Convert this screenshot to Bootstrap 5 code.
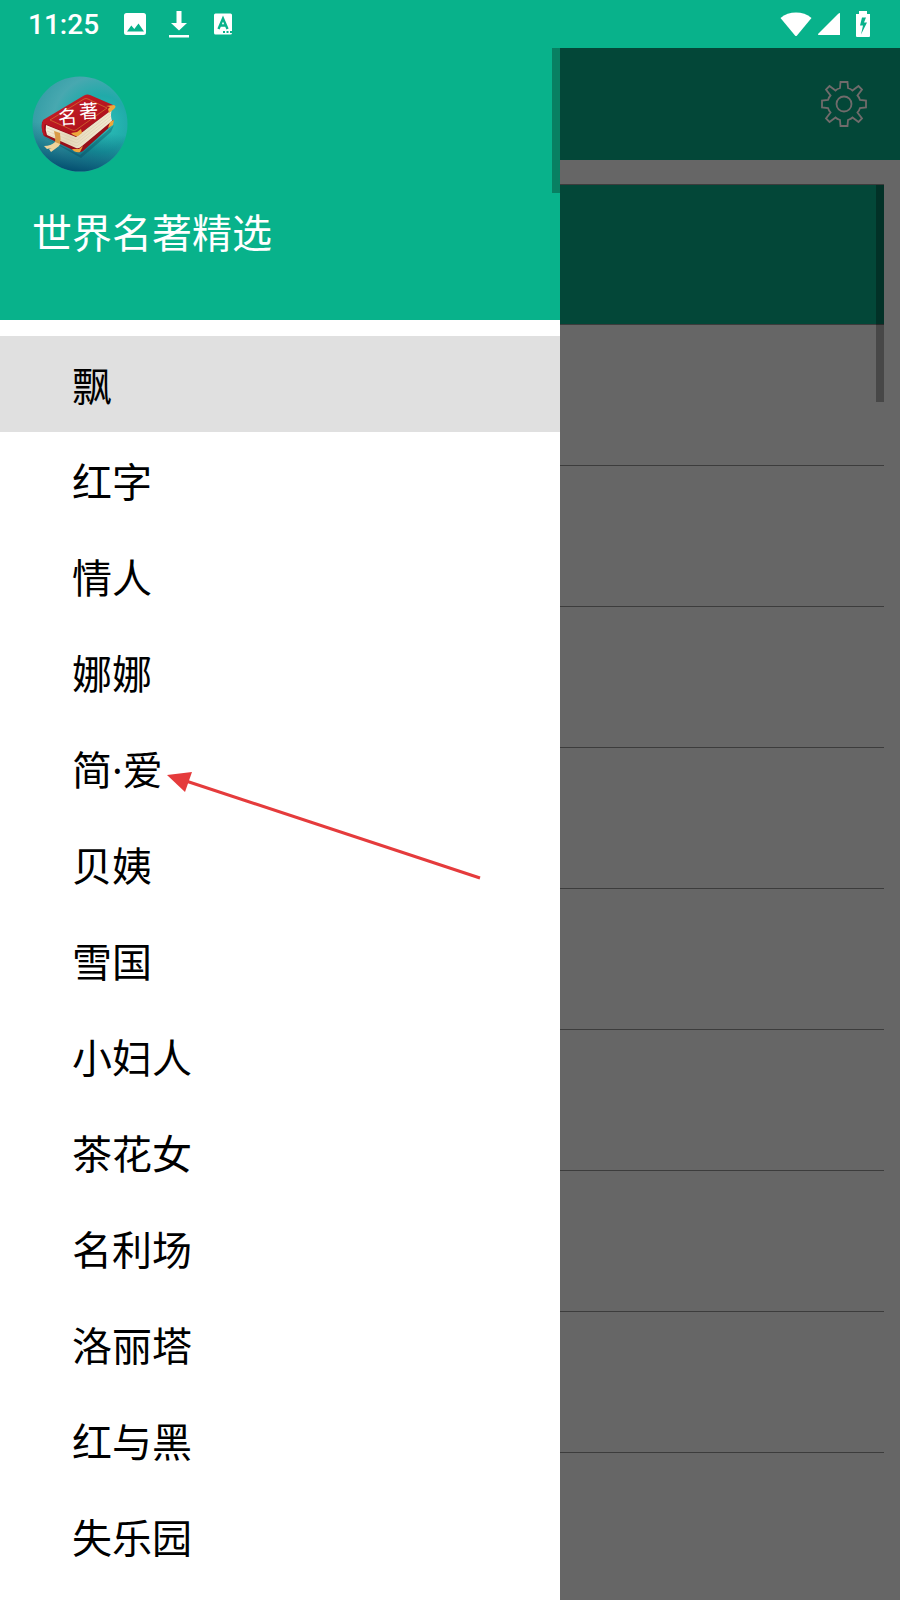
<!DOCTYPE html>
<html lang="zh-CN">
<head>
<meta charset="utf-8">
<meta name="viewport" content="width=device-width, initial-scale=1">
<title>世界名著精选</title>
<link rel="stylesheet" href="https://cdn.jsdelivr.net/npm/bootstrap@5.3.0/dist/css/bootstrap.min.css">
<style>
  :root { --brand: #08b28b; --brand-dim: #034738; --shade: #666; }
  body { font-family: "Noto Sans", "Noto Sans CJK SC", sans-serif; background: #fff; color: #000; }
  .status-bar { height: 48px; background: var(--brand); color: #fff; padding: 0 30px 0 28px; }
  .clock { font: 500 28px/46px Roboto, sans-serif; padding-top: 2px; }
  .download-icon { margin-left: 22px; }
  .drawer { flex: 0 0 560px; }
  .drawer-head { background: var(--brand); color: #fff; height: 272px; padding: 28px 32px; }
  .drawer-title, .book-link { font-size: 40px; font-weight: 400; line-height: 60px; }
  .drawer-title { margin: 31px 0 0; }
  .book-link { height: 96px; padding: 4px 72px 0; color: #000; text-decoration: none; }
  .book-link.active { background: #e0e0e0; }
  .thumb { top: 0; right: 0; width: 8px; }
  .drawer-thumb { height: 145px; background: #088062; }
  .list-thumb { height: 217px; background: rgba(0, 0, 0, .3); }
  .content { background: var(--shade); }
  .top-bar { height: 112px; background: var(--brand-dim); padding: 0 30px; }
  .chapters { margin: 24px 16px 0 0; border-top: 1px solid #3c3c3c; }
  .chapter-row { height: 141px; border-bottom: 1px solid #3c3c3c; }
  .chapter-row:first-child { height: 140px; background: var(--brand-dim); }
  .chapter-row:last-child { border-bottom: 0; }
  .pointer { left: 166px; top: 50%; }
</style>
</head>
<body class="min-vh-100 d-flex flex-column">
<header class="status-bar d-flex align-items-center">
  <span class="clock">11:25</span>
  <svg class="ms-4" width="24" height="24" viewBox="0 0 24 24" aria-hidden="true"><path fill="#fff" fill-rule="evenodd" d="M3.500 1h17A2.500 2.500 0 0 1 23 3.500v17a2.500 2.500 0 0 1-2.500 2.500h-17A2.500 2.500 0 0 1 1 20.500v-17A2.500 2.500 0 0 1 3.500 1zM4 19.500h17l-5.500-8-4.200 5.500-3-3.500z"/></svg>
  <svg class="download-icon" width="20" height="28" viewBox="0 0 20 28" aria-hidden="true"><path fill="#fff" d="M7.500 1h5v12H18l-8 7.500L2 13h5.500zM0 25h20v2.500H0z"/></svg>
  <svg class="ms-4" width="20" height="22" viewBox="0 0 20 22" aria-hidden="true"><rect x="1" y="0.500" width="18" height="21" rx="1.500" fill="#fff"/><path fill="none" stroke="#08b28b" stroke-width="2.400" d="M5.500 16 10 5.500 14.500 16M7 12.500h6"/><path fill="#08b28b" d="M10 18h2v2h-2zm3.500 0h2v2h-2zm3.500 0h2v2h-2z"/></svg>
  <svg class="ms-auto" width="32" height="26" viewBox="0 0 32 26" aria-hidden="true"><path fill="#fff" d="M.5 7C9-.3 23-.3 31.500 7L17 24.500q-1 1-2 0z"/></svg>
  <svg class="ms-1" width="24" height="24" viewBox="0 0 24 24" aria-hidden="true"><path fill="#fff" d="M24 1v22H3q-1.500 0-1-1L22 2q1-1 2-1z"/></svg>
  <svg class="ms-3" width="14" height="26" viewBox="0 0 14 26" aria-hidden="true"><path fill="#fff" fill-rule="evenodd" d="M3 0h8v3h3v22q0 1-1 1H1q-1 0-1-1V3h3zM6 6.500 4 14.500h3L5 23.500l6-12H8l2-5z"/></svg>
</header>
<div class="d-flex flex-grow-1">
  <aside class="drawer position-relative bg-white">
    <div class="drawer-head">
      <svg class="d-block" width="96" height="96" viewBox="0 0 96 96" role="img" aria-label="名著">
        <defs>
          <radialGradient id="sky" cx=".72" cy=".5" r=".85"><stop offset="0" stop-color="#2cc0ba"/><stop offset=".35" stop-color="#20aaa9"/><stop offset=".6" stop-color="#48a8b0"/><stop offset="1" stop-color="#2a98a0"/></radialGradient>
          <linearGradient id="deep" x1=".6" y1="0" x2=".45" y2="1"><stop offset=".55" stop-color="#07617a" stop-opacity="0"/><stop offset="1" stop-color="#034f70"/></linearGradient>
          <linearGradient id="cover" x2="1" y2="1"><stop stop-color="#c9202a"/><stop offset="1" stop-color="#a80d18"/></linearGradient>
          <linearGradient id="pages" x2="1" y2=".3"><stop stop-color="#fff9ea"/><stop offset=".5" stop-color="#e3d8b8"/><stop offset="1" stop-color="#f3ead2"/></linearGradient>
        </defs>
        <circle cx="48" cy="48" r="47.500" fill="url(#sky)"/>
        <circle cx="48" cy="48" r="47.500" fill="url(#deep)"/>
        <path fill="#0a4054" opacity=".35" d="m12 61 36 18 34-30-3 7-30 26z"/>
        <path fill="#97101a" d="M10 46q-1 7 2 14l33 16q3 1 6-1l29-26 2-5-34 12-34-12z"/>
        <path fill="url(#pages)" d="m14 49 30 12 36-28q-2 6 0 12L50 70q-3 3-6 2L15 59q-2-5-1-10z"/>
        <path fill="none" stroke="#d8cba8" stroke-width=".5" d="m15 52 30 12 34-27M15 55l30 12 34-27M15 58l30 12 34-27"/>
        <path fill="url(#cover)" d="M11 44 52 19.500q3-1.500 6-.5l23 10q3 1.500 0 4L49 57q-4 3-8 2L13 48q-2 5 1 11l-2 1q-4-8-1-16z"/>
        <path fill="none" stroke="#d98a32" stroke-width=".6" d="M18 44 52 23q2-1 4 0l19 9-31 22q-2 1-4 0z"/>
        <path fill="#eda83c" d="m74 30 8-1q3 1 0 4l-5 4-1-4 2-2zM39 57l6-1 4-3 1 4-4 3q-4 1-7-3zM78 46l4-2-1 5-5 3zM40 73l7 0 4-3-3 6q-5 1-8-3z"/>
        <path fill="#d99b48" d="m22 55 6 2q1 5 0 12l-5-2q1-6-1-12z"/>
        <path fill="#efd39b" d="m23 66 5 2-4 3-9 2-3-3q7 0 11-4zm5 2-1 2-8 6-2-3q6-2 8-5z"/>
        <g fill="#fff" font-family="Noto Sans CJK SC, sans-serif" font-size="19"><text x="26" y="48" transform="rotate(-3 36 41)">名</text><text x="47" y="42" transform="rotate(-3 57 35)">著</text></g>
      </svg>
      <h1 class="drawer-title">世界名著精选</h1>
    </div>
    <nav class="d-flex flex-column py-3" aria-label="书目">
      <a class="book-link active d-flex align-items-center" href="#" aria-current="page">飘</a>
      <a class="book-link d-flex align-items-center" href="#">红字</a>
      <a class="book-link d-flex align-items-center" href="#">情人</a>
      <a class="book-link d-flex align-items-center" href="#">娜娜</a>
      <a class="book-link d-flex align-items-center position-relative" href="#">简·爱
        <svg class="pointer position-absolute" width="316" height="112" viewBox="166 768 316 112" aria-hidden="true"><path stroke="#e53b3c" stroke-width="3" d="m186 781 294 97"/><path fill="#e53b3c" d="m167 775 25-3-7 20z"/></svg></a>
      <a class="book-link d-flex align-items-center" href="#">贝姨</a>
      <a class="book-link d-flex align-items-center" href="#">雪国</a>
      <a class="book-link d-flex align-items-center" href="#">小妇人</a>
      <a class="book-link d-flex align-items-center" href="#">茶花女</a>
      <a class="book-link d-flex align-items-center" href="#">名利场</a>
      <a class="book-link d-flex align-items-center" href="#">洛丽塔</a>
      <a class="book-link d-flex align-items-center" href="#">红与黑</a>
      <a class="book-link d-flex align-items-center" href="#">失乐园</a>
    </nav>
    <div class="thumb drawer-thumb position-absolute"></div>
  </aside>
  <main class="content flex-grow-1">
    <div class="top-bar d-flex align-items-center justify-content-end">
      <button class="btn p-0 border-0 lh-1" type="button" aria-label="设置">
        <svg width="52" height="52" viewBox="-26 -26 52 52" fill="none" stroke="#706b6b" stroke-width="1.800"><circle r="7.500"/><path d="M-3.500-22h7L4-16Q7-15 8.500-13.500L14.500-18 18-14.500 13.500-8.500Q15-7 16-4L22-3.500v7L16 4Q15 7 13.500 8.500L18 14.500 14.500 18 8.500 13.500Q7 15 4 16L3.500 22h-7L-4 16Q-7 15-8.500 13.500L-14.500 18-18 14.500-13.500 8.500Q-15 7-16 4L-22 3.500v-7L-16-4Q-15-7-13.500-8.500L-18-14.500-14.500-18-8.500-13.500Q-7-15-4-16z"/></svg>
      </button>
    </div>
    <div class="chapters position-relative">
      <div role="list">
        <div class="chapter-row" role="listitem"></div>
        <div class="chapter-row" role="listitem"></div>
        <div class="chapter-row" role="listitem"></div>
        <div class="chapter-row" role="listitem"></div>
        <div class="chapter-row" role="listitem"></div>
        <div class="chapter-row" role="listitem"></div>
        <div class="chapter-row" role="listitem"></div>
        <div class="chapter-row" role="listitem"></div>
        <div class="chapter-row" role="listitem"></div>
        <div class="chapter-row" role="listitem"></div>
      </div>
      <div class="thumb list-thumb position-absolute"></div>
    </div>
  </main>
</div>
<script src="https://cdn.jsdelivr.net/npm/bootstrap@5.3.0/dist/js/bootstrap.bundle.min.js"></script>
</body>
</html>
